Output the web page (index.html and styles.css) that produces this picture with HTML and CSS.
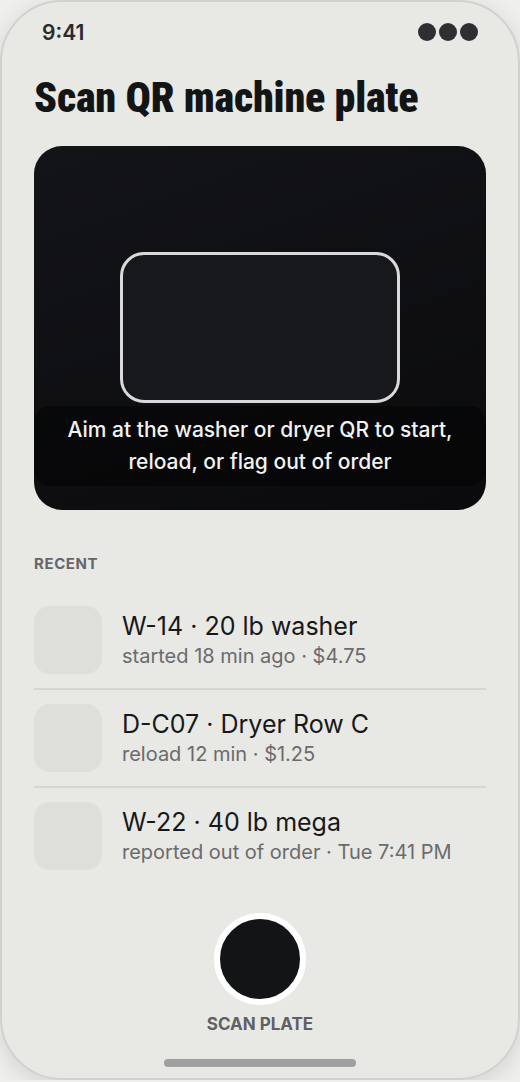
FILE: index.html
```html
<!DOCTYPE html>
<html lang="en">
<head>
    <meta charset="UTF-8">
    <meta name="viewport" content="width=device-width, initial-scale=1.0">
    <title>Scan QR machine plate</title>
    <!-- Styling for the scanner screen -->
    <link rel="stylesheet" href="styles.css">
</head>
<body>
    <div class="phone">
        <!-- Status bar -->
        <div class="status-bar">
            <span class="time">9:41</span>
            <span class="dots"><i></i><i></i><i></i></span>
        </div>

        <h1 class="title">Scan QR machine plate</h1>

        <!-- Camera viewfinder -->
        <div class="viewfinder">
            <div class="target"></div>
            <p class="hint">Aim at the washer or dryer QR to start, reload, or flag out of order</p>
        </div>

        <h2 class="section-label">RECENT</h2>

        <ul class="recent">
            <li class="row">
                <div class="thumb"></div>
                <div class="row-text">
                    <div class="row-title">W-14 · 20 lb washer</div>
                    <div class="row-sub">started 18 min ago · $4.75</div>
                </div>
            </li>
            <li class="row">
                <div class="thumb"></div>
                <div class="row-text">
                    <div class="row-title">D-C07 · Dryer Row C</div>
                    <div class="row-sub">reload 12 min · $1.25</div>
                </div>
            </li>
            <li class="row">
                <div class="thumb"></div>
                <div class="row-text">
                    <div class="row-title">W-22 · 40 lb mega</div>
                    <div class="row-sub">reported out of order · Tue 7:41 PM</div>
                </div>
            </li>
        </ul>

        <!-- Shutter button -->
        <div class="scan">
            <button class="shutter" aria-label="Scan plate"></button>
            <span class="scan-label">SCAN PLATE</span>
        </div>

        <div class="home-bar"></div>
    </div>
</body>
</html>
```

FILE: styles.css
```css
/* General Reset */
html, body {
    margin: 0;
    padding: 0;
    background: #efefee;
    font-family: "Inter", "Liberation Sans", sans-serif;
}

/* Phone frame */
.phone {
    box-sizing: border-box;
    width: 520px;
    height: 1080px;
    padding: 0 32px;
    background: #e8e8e4;
    border: 2px solid #d2d2cd;
    border-radius: 62px;
    box-shadow: 0 6px 24px rgba(0, 0, 0, 0.12);
    display: flex;
    flex-direction: column;
    overflow: hidden;
}

/* Status bar */
.status-bar {
    display: flex;
    justify-content: space-between;
    align-items: center;
    height: 24px;
    padding: 18px 8px 0 8px;
}

.time {
    font-size: 21px;
    font-weight: 600;
    color: #2a2b2e;
}

.dots {
    display: flex;
    gap: 3px;
}

.dots i {
    width: 18px;
    height: 18px;
    border-radius: 50%;
    background: #2e2f33;
}

/* Heading */
.title {
    margin: 30px 0 0;
    font-family: "Roboto", "DejaVu Sans", sans-serif;
    font-stretch: 75%;
    font-weight: 900;
    font-size: 42px;
    line-height: 48px;
    color: #131416;
    letter-spacing: -0.2px;
}

/* Viewfinder */
.viewfinder {
    position: relative;
    margin-top: 24px;
    height: 364px;
    border-radius: 28px;
    background: linear-gradient(160deg, #131418, #0b0b0d);
    display: flex;
    justify-content: center;
    align-items: center;
}

.target {
    box-sizing: border-box;
    width: 280px;
    height: 151px;
    margin-bottom: 2px;
    border: 3px solid #d9d9da;
    border-radius: 24px;
    background: #17181c;
}

.hint {
    position: absolute;
    left: 0;
    right: 0;
    bottom: 24px;
    margin: 0;
    padding: 8px 20px;
    border-radius: 16px;
    background: rgba(0, 0, 0, 0.45);
    color: #f2f2f2;
    font-size: 21px;
    font-weight: 500;
    line-height: 32px;
    text-align: center;
}

/* Recent list */
.section-label {
    margin: 44px 0 0;
    font-size: 15px;
    font-weight: 700;
    letter-spacing: 0.6px;
    color: #65666a;
    line-height: 20px;
}

.recent {
    list-style: none;
    margin: 18px 0 0;
    padding: 0;
}

.row {
    display: flex;
    align-items: center;
    gap: 20px;
    padding: 14px 0;
    border-bottom: 2px solid #d6d6d1;
}

.row:last-child {
    border-bottom: none;
}

.thumb {
    flex: none;
    width: 68px;
    height: 68px;
    border-radius: 16px;
    background: #dededa;
}

.row-title {
    font-size: 25px;
    line-height: 28px;
    color: #17181a;
}

.row-sub {
    margin-top: 4px;
    font-size: 20px;
    line-height: 24px;
    color: #6a6b6e;
}

/* Scan button */
.scan {
    margin-top: 29px;
    display: flex;
    flex-direction: column;
    align-items: center;
}

.shutter {
    box-sizing: border-box;
    width: 92px;
    height: 92px;
    border-radius: 50%;
    border: 6px solid #ffffff;
    background: #131416;
    padding: 0;
    cursor: pointer;
}

.scan-label {
    margin-top: 8px;
    font-size: 17px;
    font-weight: 700;
    color: #5f6064;
    line-height: 22px;
}

.home-bar {
    align-self: center;
    margin-top: 24px;
    width: 192px;
    height: 8px;
    border-radius: 4px;
    background: #a0a0a0;
}
```
